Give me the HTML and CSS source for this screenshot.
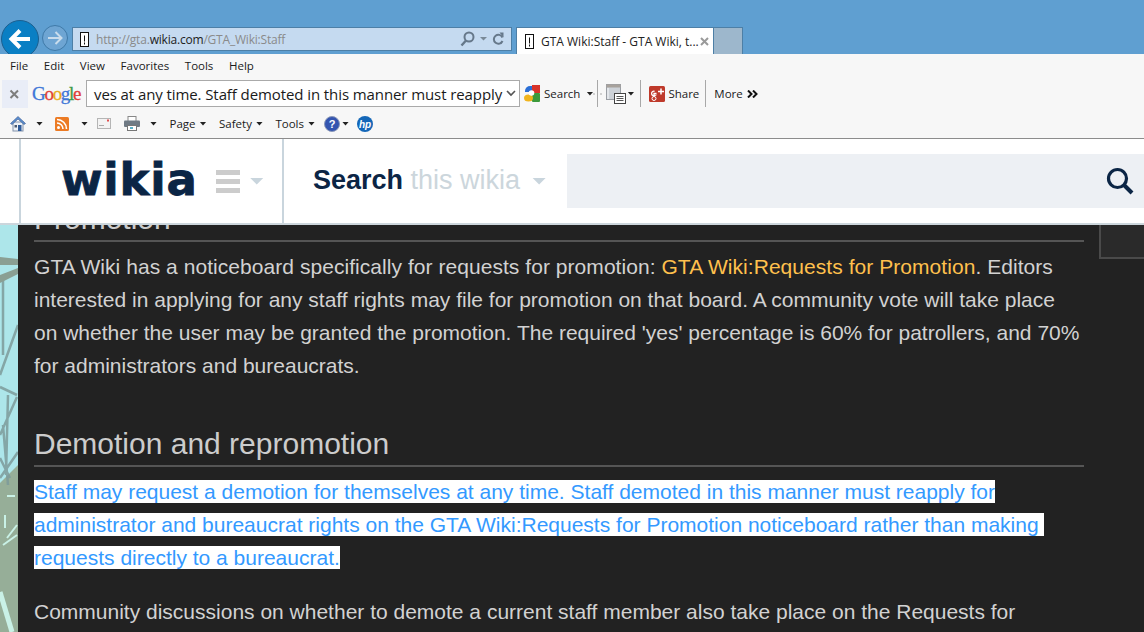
FILE: index.html
```html
<!DOCTYPE html>
<html lang="en">
<head>
<meta charset="utf-8">
<title>GTA Wiki:Staff</title>
<link rel="stylesheet" href="styles.css">
</head>
<body>
<header class="chrome">
  <div class="nav-buttons">
    <svg class="back" width="38" height="38" viewBox="0 0 38 38"><circle cx="19" cy="19" r="18.500" fill="#0a7fc4" stroke="#1c5f8f"/><path d="M29 19H11M19 10.500 10.500 19l8.500 8.500" fill="none" stroke="#fff" stroke-width="4"/></svg>
    <svg class="forward" width="26" height="26" viewBox="0 0 26 26"><circle cx="13" cy="13" r="12.500" fill="#6ea5d3" stroke="#3f7aa8"/><path d="M6 13h13M13.500 7l6 6-6 6" fill="none" stroke="#c9dcec" stroke-width="2"/></svg>
  </div>
  <div class="address">
    <svg class="favicon" width="9" height="15" viewBox="0 0 9 15"><rect x=".5" y=".5" width="8" height="14" fill="#fff" stroke="#111"/><path d="M4.500 3.500v6M4.500 10.500v2" stroke="#111"/></svg>
    <span class="url">http://gta.<b>wikia.com</b>/GTA_Wiki:Staff</span>
    <svg class="addr-tools" width="46" height="16" viewBox="0 0 46 16"><circle cx="9" cy="6" r="4.500" fill="none" stroke="#66788a" stroke-width="2"/><path d="M6 9.500 1.500 14.500" stroke="#66788a" stroke-width="2.400"/><path d="M20 6h7l-3.500 3.500z" fill="#7a8a98"/><path d="M42.500 6.500a4.500 4.500 0 1 0 0 3.500" fill="none" stroke="#66788a" stroke-width="2"/><path d="M39.500 1.500l4 0 0 5z" fill="#66788a"/></svg>
  </div>
  <div class="tab">
    <svg class="favicon" width="9" height="15" viewBox="0 0 9 15"><rect x=".5" y=".5" width="8" height="14" fill="#fff" stroke="#111"/><path d="M4.500 3.500v6M4.500 10.500v2" stroke="#111"/></svg>
    <span class="tab-title">GTA Wiki:Staff - GTA Wiki, t...</span>
    <svg class="tab-close" width="9" height="9" viewBox="0 0 9 9"><path d="M1 1l7 7M8 1 1 8" stroke="#9a9a9a" stroke-width="2"/></svg>
  </div>
  <div class="new-tab"></div>
</header>

<nav class="menu-bar">
  <span>File</span><span>Edit</span><span>View</span><span>Favorites</span><span>Tools</span><span>Help</span>
</nav>

<div class="google-bar">
  <svg class="close-box" width="26" height="28" viewBox="0 0 26 28"><path d="M8.500 10.500l7.500 7.500M16 10.500 8.500 18" stroke="#7d7d7d" stroke-width="2"/></svg>
  <span class="google"><i class="g1">G</i><i class="g2">o</i><i class="g3">o</i><i class="g1">g</i><i class="g4">l</i><i class="g2">e</i></span>
  <div class="google-input">
    <span class="google-text">ves at any time. Staff demoted in this manner must reapply</span>
    <svg width="10" height="7" viewBox="0 0 10 7"><path d="M1 1l4 4 4-4" fill="none" stroke="#555" stroke-width="1.600"/></svg>
  </div>
  <svg class="g-search" width="16" height="17" viewBox="0 0 16 17"><path d="M1 6a5 5 0 0 1 5-5h2v6H1z" fill="#2b6fd6"/><rect x="8" y="0" width="8" height="8" fill="#d8342a"/><rect x="8" y="8" width="8" height="9" rx="1" fill="#3c9a3c"/><ellipse cx="4.500" cy="13" rx="4.500" ry="3.500" fill="#f1b41c"/><circle cx="7.500" cy="8" r="2.800" fill="#fff"/></svg>
  <span class="tb-label">Search</span><i class="caret"></i>
  <svg class="dots" width="9" height="27" viewBox="0 0 9 27"><path d="M4.500 0v27" stroke="#a8a8a8"/><path d="M0 14h2M1 13v2M7 14h2M8 13v2" stroke="#c4c4c4"/></svg>
  <svg class="g-pages" width="20" height="20" viewBox="0 0 20 20"><rect x=".5" y=".5" width="14" height="15" fill="#cdd2d8" stroke="#9a9ea4"/><rect x=".5" y=".5" width="14" height="3" fill="#a8a29c"/><rect x="1" y="4" width="2" height="11" fill="#e3e6ea"/><rect x="8.500" y="9.500" width="11" height="10" fill="#fff" stroke="#444"/><path d="M10.500 12.500h7M10.500 14.500h7M10.500 16.500h7" stroke="#555"/></svg>
  <i class="caret c-pages"></i><span class="sep"></span>
  <svg class="g-plus" width="16" height="16" viewBox="0 0 16 16"><rect width="16" height="16" rx="1.500" fill="#bf3a2b"/><path d="M7.500 7.500H5v1.800h1.300a2.300 2.300 0 1 1-.7-4" fill="none" stroke="#fff" stroke-width="1.300"/><circle cx="5" cy="12.500" r="2" fill="none" stroke="#fff"/><path d="M12 2.500v6M9 5.500h6" stroke="#fff" stroke-width="1.500"/></svg>
  <span class="tb-label">Share</span><span class="sep"></span>
  <span class="tb-label">More</span>
  <svg class="chev" width="11" height="8" viewBox="0 0 11 8"><path d="M1 .5 4.500 4 1 7.500M6 .5 9.500 4 6 7.500" fill="none" stroke="#111" stroke-width="2"/></svg>
</div>

<div class="fav-bar">
  <svg width="16" height="17" viewBox="0 0 16 17"><rect x="3" y="7" width="10" height="9" fill="#eef2f7" stroke="#8393ab"/><path d="M.5 8.500 8 1.500l7.500 7-1.500 1L8 4 2 9.500z" fill="#5b8fd0" stroke="#36568c" stroke-width=".6"/><rect x="8" y="10" width="3.500" height="6" fill="#2e5b9a"/><rect x="4.500" y="10" width="2.500" height="2.500" fill="#4a5a70"/></svg><i class="caret c-home"></i>
  <svg class="i-rss" width="14" height="14" viewBox="0 0 14 14"><rect width="14" height="14" rx="1.500" fill="#ec7b24"/><circle cx="3.500" cy="10.500" r="1.500" fill="#fff"/><path d="M2 6a6 6 0 0 1 6 6M2 2.500A9.500 9.500 0 0 1 11.500 12" fill="none" stroke="#fff" stroke-width="1.600"/></svg><i class="caret c-rss"></i>
  <svg class="i-mail" width="14" height="11" viewBox="0 0 14 11"><rect x=".5" y=".5" width="13" height="10" fill="#f3f3f3" stroke="#b5b5b5"/><path d="M2 7.500h5" stroke="#aaa"/><rect x="10" y="1.500" width="2" height="2" fill="#e05050"/></svg>
  <svg class="i-print" width="16" height="15" viewBox="0 0 16 15"><rect x="4" y=".5" width="8" height="5" fill="#fff" stroke="#888"/><rect x="0" y="4.500" width="16" height="6.500" rx="1" fill="#6f7a84"/><rect x="3.500" y="9.500" width="9" height="5" fill="#fff" stroke="#777"/><rect x="6" y="11" width="3" height="2" fill="#5ab0c8"/></svg><i class="caret c-print"></i>
  <span class="fav-label">Page</span><i class="caret"></i>
  <span class="fav-label">Safety</span><i class="caret"></i>
  <span class="fav-label">Tools</span><i class="caret"></i>
  <svg class="i-help" width="16" height="16" viewBox="0 0 16 16"><circle cx="8" cy="8" r="7.500" fill="#3455b0" stroke="#8a98b8"/><text x="8" y="12" text-anchor="middle" class="help-q">?</text></svg><i class="caret c-help"></i>
  <svg class="i-hp" width="16" height="16" viewBox="0 0 16 16"><circle cx="8" cy="8" r="8" fill="#1467b8"/><text x="8" y="12" text-anchor="middle" class="hp-t">hp</text></svg>
</div>

<div class="wiki-nav">
  <div class="nav-gutter"></div>
  <div class="logo-cell">
    <span class="logo">wikia</span>
    <span class="burger"><i></i><i></i><i></i></span>
    <i class="nav-caret"></i>
  </div>
  <div class="search-cell">
    <span class="search-label"><b>Search</b> <span>this wikia</span></span>
    <i class="nav-caret search-caret"></i>
    <div class="search-box">
      <svg width="28" height="28" viewBox="0 0 28 28"><circle cx="11.500" cy="11.500" r="9" fill="none" stroke="#0b2545" stroke-width="3.200"/><path d="M18 18l8 8" stroke="#0b2545" stroke-width="4"/></svg>
    </div>
  </div>
</div>

<main class="page">
  <svg class="backdrop" width="18" height="407" viewBox="0 0 18 407">
    <rect width="18" height="407" fill="#ade6ea"/>
    <path d="M0 258 18 240V407H0z" fill="#96ae98"/>
    <g fill="none" stroke="#7d9a9a" stroke-width="2.500" opacity=".85">
      <path d="M3 55V130M18 100 0 150M0 162 17 170M17 172 0 210M8 170 6 250M18 227 0 253M0 233 10 253M3 200 8 260"/>
    </g>
    <path d="M0 32 18 34V40L0 40zM0 50 18 43V49L8 54 0 58z" fill="#8a9f93"/>
    <g stroke="#c9f1e6" stroke-width="2" fill="none">
      <path d="M7 271h8M5 290v13M17 300 7 313M17 310 3 320"/>
      <path d="M0 367 12 407" stroke-width="5"/>
    </g>
  </svg>
  <div class="column">
    <aside class="corner-box"></aside>
    <article class="article">
      <h2>Promotion</h2>
      <p class="intro">GTA Wiki has a noticeboard specifically for requests for promotion: <a>GTA Wiki:Requests for Promotion</a>. Editors interested in applying for any staff rights may file for promotion on that board. A community vote will take place on whether the user may be granted the promotion. The required 'yes' percentage is 60% for patrollers, and 70% for administrators and bureaucrats.</p>
      <h2>Demotion and repromotion</h2>
      <p class="selected"><span>Staff may request a demotion for themselves at any time. Staff demoted in this manner must reapply for</span><br><span>administrator and bureaucrat rights on the GTA Wiki:Requests for Promotion noticeboard rather than making </span><br><span>requests directly to a bureaucrat.</span></p>
      <p class="last">Community discussions on whether to demote a current staff member also take place on the Requests for</p>
    </article>
  </div>
</main>
</body>
</html>
```
FILE: styles.css
```css
* { box-sizing: border-box; }
html, body { margin: 0; height: 632px; overflow: hidden; background: #fff; }
body { display: flex; flex-direction: column; font-family: "Liberation Sans", Arial, sans-serif; }
i { font-style: normal; }
svg { flex: none; display: block; }

.chrome { height: 54px; flex: none; background: #5f9fd1; display: flex; align-items: flex-start; padding-top: 27px; overflow: hidden; }
.nav-buttons { width: 72px; flex: none; position: relative; height: 27px; }
.back { position: absolute; left: 1px; top: -7px; }
.forward { position: absolute; left: 42px; top: -2px; }
.address { width: 440px; height: 24px; background: #c5daf0; border: 1px solid #4d7fa6; display: flex; align-items: center; padding-left: 7px; gap: 7px; font: 12px "Open Sans", sans-serif; color: #8a8a8a; }
.url { flex: 1; letter-spacing: -.2px; }
.url b { font-weight: 400; color: #222; }
.addr-tools { margin-right: 5px; }
.tab { margin-left: 4px; width: 198px; height: 27px; background: #fff; border: 1px solid #4d7fa6; border-bottom: 0; display: flex; align-items: center; padding-left: 8px; gap: 7px; font: 12px "Open Sans", sans-serif; color: #222; }
.tab-title { flex: none; width: 155px; white-space: nowrap; }
.tab-close { margin-left: -3px; }
.new-tab { width: 29px; height: 27px; background: #9db7cc; border: 1px solid #4d7fa6; border-left: 0; border-bottom: 0; }

.menu-bar { height: 24px; flex: none; background: #f7f7f7; display: flex; align-items: center; gap: 15.600px; padding: 0 0 2px 10px; font: 11.500px "Open Sans", sans-serif; color: #1a1a1a; }
.google-bar { height: 32px; flex: none; background: #f7f7f7; display: flex; align-items: center; padding: 0 0 1px 2px; font: 11.500px "Open Sans", sans-serif; color: #1a1a1a; }
.close-box { background: #e9edf7; }
.google { width: 58px; padding-left: 4px; font: 19px "Liberation Serif", serif; letter-spacing: -1.300px; -webkit-text-stroke: .3px; }
.g1 { color: #3f77d8; } .g2 { color: #e0403a; } .g3 { color: #e8ac1c; } .g4 { color: #3f9a48; }
.google-input { width: 434px; height: 27px; background: #fff; border: 1px solid #aaa; display: flex; align-items: center; justify-content: space-between; padding: 0 3px 0 7px; font: 15px "Open Sans", sans-serif; color: #1a1a1a; }
.google-text { white-space: nowrap; letter-spacing: -.09px; }
.g-search { margin: 0 4px; }
.tb-label { white-space: nowrap; }
.caret { width: 7px; height: 4px; background: #222; clip-path: polygon(0 0, 100% 0, 50% 100%); display: block; flex: none; margin-left: 6px; }
.dots { margin-right: 4px; }
.c-pages { margin-left: 1px; }
.sep { width: 1px; height: 27px; background: #a8a8a8; margin: 0 8px 0 6px; flex: none; }
.g-plus { margin-right: 3px; }
.chev { margin-left: 4px; }

.fav-bar { height: 29px; flex: none; background: #f7f7f7; border-bottom: 1px solid #8c8c8c; display: flex; align-items: center; padding: 0 0 1px 10px; font: 11.500px "Open Sans", sans-serif; color: #1a1a1a; }
.fav-bar .caret { margin-left: 4px; }
.fav-bar .c-home { margin-left: 10px; }
.i-rss { margin-left: 12px; }
.fav-bar .c-rss { margin-left: 12px; }
.i-mail { margin-left: 9px; }
.i-print { margin-left: 13px; }
.fav-bar .c-print { margin-left: 10px; }
.fav-label { margin-left: 12.500px; }
.i-help { margin-left: 9px; }
.fav-bar .c-help { margin-left: 2px; }
.i-hp { margin-left: 8px; }
.help-q { font: 700 11px "Liberation Sans", sans-serif; fill: #fff; }
.hp-t { font: italic 700 10px "Liberation Sans", sans-serif; fill: #fff; }

.wiki-nav { height: 86px; flex: none; background: #fff; border-bottom: 2px solid #ccd6dc; display: flex; }
.nav-gutter { width: 21px; flex: none; border-right: 2px solid #c9d5dd; }
.logo-cell { width: 263px; flex: none; border-right: 2px solid #c9d5dd; display: flex; align-items: center; padding-left: 40px; }
.logo { font: 700 45px "DejaVu Sans", sans-serif; color: #0b2545; letter-spacing: .8px; line-height: 1; margin-bottom: 4px; -webkit-text-stroke: .8px #0b2545; }
.burger { display: flex; flex-direction: column; gap: 4px; margin-left: 18px; width: 24px; }
.burger i { height: 5px; background: #ccc; }
.nav-caret { width: 14px; height: 7px; background: #c9d5dd; clip-path: polygon(0 0, 100% 0, 50% 100%); margin-left: 10px; }
.search-cell { flex: 1; display: flex; align-items: center; padding-left: 29px; }
.search-label { font-size: 27px; color: #0b2545; white-space: nowrap; margin-bottom: 2px; }
.search-label span { color: #ccd6dc; }
.search-caret { margin-left: 12px; }
.search-box { width: 577px; height: 54px; background: #edf0f4; margin-left: 21px; display: flex; align-items: center; justify-content: flex-end; padding-right: 10px; }

.page { flex: 1; display: flex; min-height: 0; overflow: hidden; background: #222; }
.backdrop { flex: none; }
.column { flex: 1; position: relative; padding: 0 60px 0 16px; }
.corner-box { position: absolute; right: 0; top: 0; width: 45px; height: 34px; background: #2a2a2a; border-left: 2px solid #4a4a4a; border-bottom: 2px solid #4a4a4a; }
.article { margin-top: -25px; color: #d2d2d2; font-size: 21px; line-height: 33px; }
.article h2 { font-size: 30px; font-weight: 400; line-height: 38px; padding-bottom: 2px; margin: 0 0 8px; border-bottom: 2px solid #555; color: #cccccc; }
.article p { margin: 0; }
.article p + h2 { margin-top: 43px; }
.article .intro::first-line { letter-spacing: .05px; }
.article a { color: #ffc04d; }
.selected { color: #39f; }
.selected span { background: #fff; white-space: pre; }
.article p.last { margin-top: 21px; white-space: nowrap; }
```
